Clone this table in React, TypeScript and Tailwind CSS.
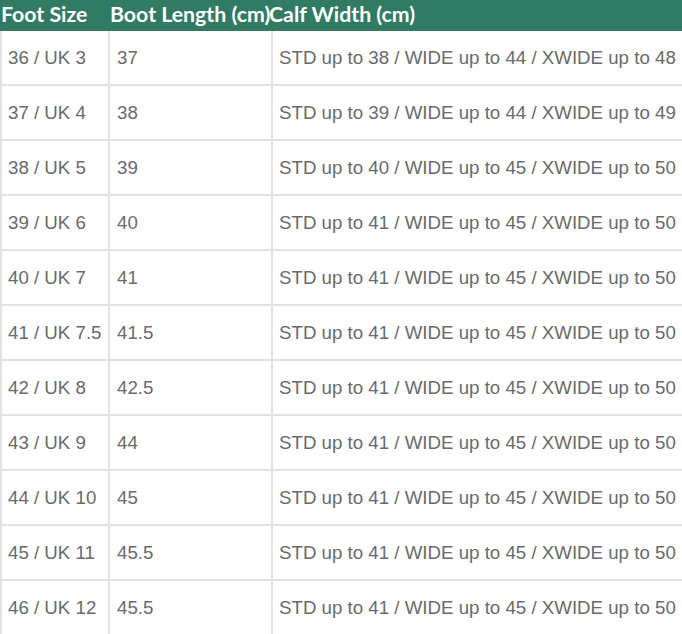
const ROWS = [
  ["36 / UK 3", "37", "STD up to 38 / WIDE up to 44 / XWIDE up to 48"],
  ["37 / UK 4", "38", "STD up to 39 / WIDE up to 44 / XWIDE up to 49"],
  ["38 / UK 5", "39", "STD up to 40 / WIDE up to 45 / XWIDE up to 50"],
  ["39 / UK 6", "40", "STD up to 41 / WIDE up to 45 / XWIDE up to 50"],
  ["40 / UK 7", "41", "STD up to 41 / WIDE up to 45 / XWIDE up to 50"],
  ["41 / UK 7.5", "41.5", "STD up to 41 / WIDE up to 45 / XWIDE up to 50"],
  ["42 / UK 8", "42.5", "STD up to 41 / WIDE up to 45 / XWIDE up to 50"],
  ["43 / UK 9", "44", "STD up to 41 / WIDE up to 45 / XWIDE up to 50"],
  ["44 / UK 10", "45", "STD up to 41 / WIDE up to 45 / XWIDE up to 50"],
  ["45 / UK 11", "45.5", "STD up to 41 / WIDE up to 45 / XWIDE up to 50"],
  ["46 / UK 12", "45.5", "STD up to 41 / WIDE up to 45 / XWIDE up to 50"],
];

export default function App() {
  return (
    <main className="w-[682px] h-[634px] overflow-hidden bg-white">
      <div className="grid grid-cols-[108px_163px_1fr] h-[31px] bg-[#317a64] text-white font-bold text-[21.3px] leading-[28px] [font-family:'Lato',sans-serif] whitespace-nowrap">
        <div className="pl-[1px]">Foot Size</div>
        <div className="pl-[2px]">Boot Length (cm)</div>
        <div className="-ml-[2px]">Calf Width (cm)</div>
      </div>

      {ROWS.map((row, i) => (
        <div
          key={i}
          className="grid grid-cols-[108px_163px_1fr] h-[55px] border-b-2 border-[#e2e2e2] text-[#6a6a6a] text-[18.7px] [font-family:'Liberation_Sans',Arial,sans-serif] whitespace-nowrap"
        >
          <div className="flex items-center pl-[6px] pt-[2px] border-l-2 border-[#e2e2e2]">{row[0]}</div>
          <div className="flex items-center pl-[7px] pt-[2px] border-l-2 border-[#e2e2e2]">{row[1]}</div>
          <div className="flex items-center pl-[6px] pt-[2px] border-l-2 border-[#e2e2e2]">{row[2]}</div>
        </div>
      ))}
    </main>
  );
}
